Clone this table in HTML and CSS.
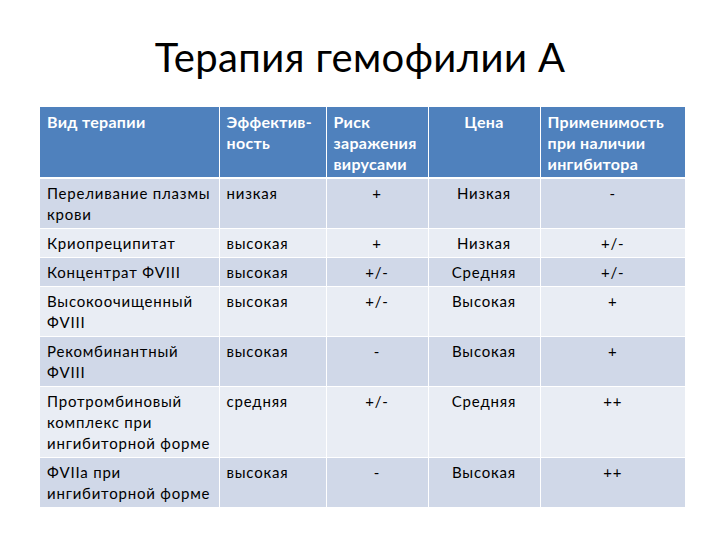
FILE: index.html
```html
<!DOCTYPE html>
<html lang="ru">
<head>
<meta charset="utf-8">
<link rel="stylesheet" href="styles.css">
</head>
<body>
<div class="slide">
  <h1 class="title">Терапия гемофилии А</h1>
  <table class="grid">
    <colgroup>
      <col class="c1"><col class="c2"><col class="c3"><col class="c4"><col class="c5">
    </colgroup>
    <thead>
      <tr>
        <th>Вид терапии</th>
        <th>Эффектив-<br>ность</th>
        <th>Риск<br>заражения<br>вирусами</th>
        <th class="mid">Цена</th>
        <th>Применимость<br>при наличии<br>ингибитора</th>
      </tr>
    </thead>
    <tbody>
      <tr class="dark">
        <td>Переливание плазмы<br>крови</td><td>низкая</td><td class="mid">+</td><td class="mid">Низкая</td><td class="mid">-</td>
      </tr>
      <tr class="light">
        <td>Криопреципитат</td><td>высокая</td><td class="mid">+</td><td class="mid">Низкая</td><td class="mid">+/-</td>
      </tr>
      <tr class="dark">
        <td>Концентрат ФVIII</td><td>высокая</td><td class="mid">+/-</td><td class="mid">Средняя</td><td class="mid">+/-</td>
      </tr>
      <tr class="light">
        <td>Высокоочищенный<br>ФVIII</td><td>высокая</td><td class="mid">+/-</td><td class="mid">Высокая</td><td class="mid">+</td>
      </tr>
      <tr class="dark">
        <td>Рекомбинантный<br>ФVIII</td><td>высокая</td><td class="mid">-</td><td class="mid">Высокая</td><td class="mid">+</td>
      </tr>
      <tr class="light">
        <td>Протромбиновый<br>комплекс при<br>ингибиторной форме</td><td>средняя</td><td class="mid">+/-</td><td class="mid">Средняя</td><td class="mid">++</td>
      </tr>
      <tr class="dark">
        <td>ФVIIa при<br>ингибиторной форме</td><td>высокая</td><td class="mid">-</td><td class="mid">Высокая</td><td class="mid">++</td>
      </tr>
    </tbody>
  </table>
</div>
</body>
</html>
```
FILE: styles.css
```css
html, body {
  margin: 0;
  padding: 0;
  background: #ffffff;
}
.slide {
  width: 720px;
  height: 540px;
  display: flex;
  flex-direction: column;
  font-family: Lato, "Open Sans", "Liberation Sans", sans-serif;
}
.title {
  margin: 0;
  height: 107px;
  display: flex;
  align-items: center;
  justify-content: center;
  font-weight: 400;
  font-size: 40px;
  color: #000;
  padding-top: 6px;
  box-sizing: border-box;
  letter-spacing: 0.4px;
}
.grid {
  margin-left: 40px;
  width: 645px;
  border-collapse: collapse;
  table-layout: fixed;
  font-size: 15px;
  line-height: 21px;
}
.c1 { width: 179px; }
.c2 { width: 107px; }
.c3 { width: 102px; }
.c4 { width: 112px; }
.c5 { width: 145px; }
.grid th, .grid td {
  border: 1px solid #ffffff;
  padding: 4px 7px 3px 7px;
  vertical-align: top;
  text-align: left;
}
.grid th {
  background: #4f81bd;
  color: #ffffff;
  font-weight: 700;
  font-size: 16px;
  letter-spacing: 0.3px;
  height: 65px;
  padding-top: 4px;
  padding-bottom: 1px;
  border-bottom: 2px solid #ffffff;
  border-top: none;
}
.grid td {
  color: #000;
  letter-spacing: 0.8px;
}
.grid .mid { text-align: center; }
.dark td { background: #d0d8e8; }
.light td { background: #e9edf4; }
.grid tr td:first-child, .grid tr th:first-child { border-left: none; }
.grid tr td:last-child, .grid tr th:last-child { border-right: none; }
.grid tbody tr:last-child td { border-bottom: none; }
```
